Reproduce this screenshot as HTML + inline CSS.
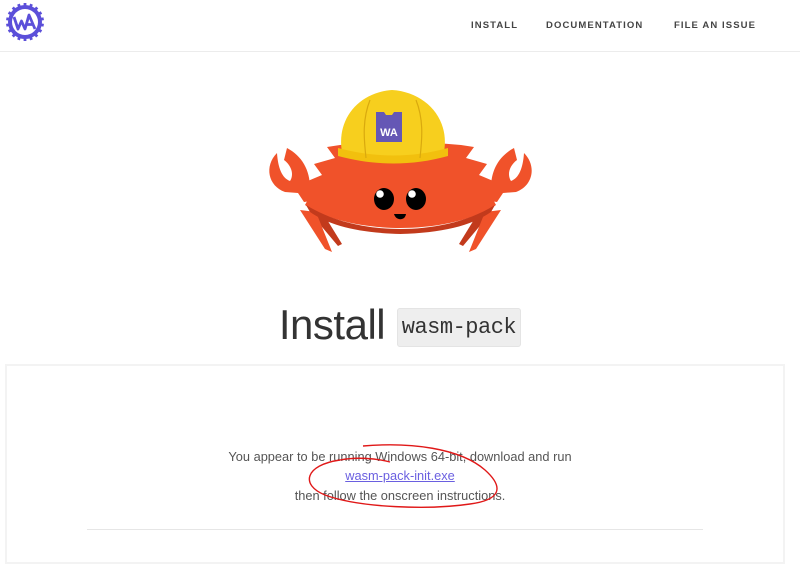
<!DOCTYPE html>
<html><head><meta charset="utf-8"><style>
*{margin:0;padding:0;box-sizing:border-box}
body{width:800px;height:548px;overflow:hidden;background:#fff;font-family:"Liberation Sans",sans-serif;position:relative}
.hdr{position:absolute;left:0;top:0;width:800px;height:52px;border-bottom:1px solid #ececec}
.nav{position:absolute;top:20px;font-size:9.5px;letter-spacing:1.1px;color:#444;font-weight:bold}
h1{position:absolute;left:0;width:800px;top:300px;text-align:center;font-weight:300;font-size:42px;color:#333;line-height:50px}
h1 code{font-family:"Liberation Mono",monospace;font-size:22px;background:#eee;border:1px solid #e4e4e4;border-radius:3px;padding:6px 4px;vertical-align:6px;color:#333;letter-spacing:-0.5px}
.box{position:absolute;left:5px;top:364px;width:780px;height:200px;border:2px solid #f3f3f3}
.txt{position:absolute;left:0;width:800px;text-align:center;font-size:12.8px;color:#555}
.hr{position:absolute;left:87px;top:529px;width:616px;height:1px;background:#e6e6e6}
</style></head><body>
<div class="hdr">
<svg style="position:absolute;left:5px;top:2px" width="40" height="40" viewBox="0 0 40 40">
<g fill="#5b4fd9">
<circle cx="20" cy="20" r="17"/>
<g id="t"><rect x="18.6" y="1" width="2.8" height="4"/></g>
<use href="#t" transform="rotate(20 20 20)"/><use href="#t" transform="rotate(40 20 20)"/><use href="#t" transform="rotate(60 20 20)"/><use href="#t" transform="rotate(80 20 20)"/><use href="#t" transform="rotate(100 20 20)"/><use href="#t" transform="rotate(120 20 20)"/><use href="#t" transform="rotate(140 20 20)"/><use href="#t" transform="rotate(160 20 20)"/><use href="#t" transform="rotate(180 20 20)"/><use href="#t" transform="rotate(200 20 20)"/><use href="#t" transform="rotate(220 20 20)"/><use href="#t" transform="rotate(240 20 20)"/><use href="#t" transform="rotate(260 20 20)"/><use href="#t" transform="rotate(280 20 20)"/><use href="#t" transform="rotate(300 20 20)"/><use href="#t" transform="rotate(320 20 20)"/><use href="#t" transform="rotate(340 20 20)"/>
</g>
<circle cx="20" cy="20" r="13" fill="#fff"/>
<path d="M9 15 L13 27 L16.5 19 L20 27 L24 13 L30 27 M21.5 22.5 H28" stroke="#5b4fd9" stroke-width="2.8" fill="none" stroke-linejoin="round"/>
</svg>
<div class="nav" style="left:471px">INSTALL</div>
<div class="nav" style="left:546px">DOCUMENTATION</div>
<div class="nav" style="left:674px">FILE AN ISSUE</div>
</div>

<svg style="position:absolute;left:250px;top:80px" width="300" height="180" viewBox="250 80 300 180">
<defs>
<g id="half">
<path d="M312 215 L326 218 L342 244 L338 246Z" fill="#c23a1c"/>
<path d="M300 210 L316 212 L332 252 L325 249Z" fill="#f0522a"/>
<path d="M277 153 C264 166 268 186 285 192 L298 193 L304 202 L318 200 L310 188 C310 170 302 156 287 148 L284 160 C292 166 294 175 290 181 C282 178 278 168 277 153Z" fill="#f0522a"/>
<path d="M401 140 L340 145 L327 147 L335 158 L314 164 L322 175 L303 183 L312 192 L305 205 C330 222 370 228 401 228Z" fill="#f0522a"/>
<path d="M306 205 C335 223 370 229 401 229 L401 234 C360 233 330 226 310 212Z" fill="#c23a1c"/>
</g>
</defs>
<use href="#half"/>
<use href="#half" transform="translate(801,0) scale(-1,1)"/>
<path d="M342 152 C336 118 360 92 392 90 C425 92 450 118 444 152 C410 160 375 160 342 152Z" fill="#f7cf1e"/>
<path d="M338 148 C375 158 412 158 448 148 L448 156 C412 166 375 166 338 156Z" fill="#f2c00e"/>
<path d="M370 100 C362 120 364 140 366 158 M416 100 C424 120 422 140 420 158" stroke="#d9a90e" stroke-width="1.2" fill="none"/>
<path d="M376 112 L384 112 L386 115 L392 115 L394 112 L402 112 L402 142 L376 142Z" fill="#6557b5"/>
<text x="389" y="136" font-family="Liberation Sans,sans-serif" font-size="11" font-weight="bold" fill="#fff" text-anchor="middle">WA</text>
<ellipse cx="384" cy="199" rx="10" ry="11" fill="#000"/>
<ellipse cx="416" cy="199" rx="10" ry="11" fill="#000"/>
<circle cx="380" cy="194" r="3.8" fill="#fff"/>
<circle cx="412" cy="194" r="3.8" fill="#fff"/>
<path d="M394 214 L406 214 C405 221 396 221 394 214Z" fill="#000"/>
</svg>

<h1><span style="letter-spacing:-0.5px">Install</span> <code>wasm-pack</code></h1>
<div class="box"></div>
<div class="txt" style="top:449px">You appear to be running Windows 64-bit, download and run</div>
<div class="txt" style="top:468px"><span style="color:#6a5fe0;text-decoration:underline">wasm-pack-init.exe</span></div>
<div class="txt" style="top:488px">then follow the onscreen instructions.</div>
<svg style="position:absolute;left:300px;top:440px" width="210" height="75" viewBox="0 0 210 75">
<path d="M63 6 C110 2 160 8 185 30 C205 48 200 60 170 64 C130 70 60 68 25 55 C0 45 5 25 40 20 C55 17 75 18 90 22" stroke="#e01818" stroke-width="1.4" fill="none"/>
</svg>
<div class="hr"></div>
</body></html>
